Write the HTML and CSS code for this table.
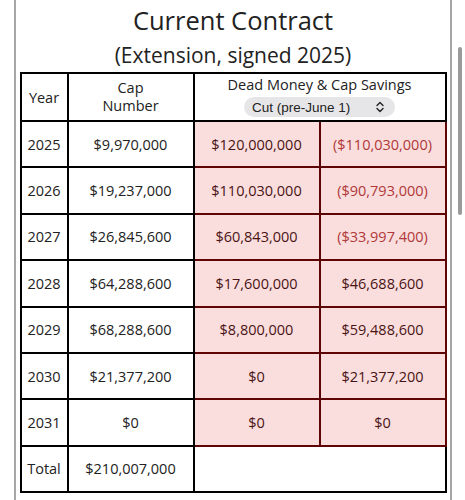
FILE: index.html
```html
<!DOCTYPE html>
<html lang="en">
<head>
    <meta charset="UTF-8">
    <meta name="viewport" content="width=device-width, initial-scale=1.0">
    <title>Current Contract</title>
    <link rel="stylesheet" href="styles.css">
</head>
<body>

    <!-- Contract card -->
    <div class="frame">
        <h2 class="title">Current Contract</h2>
        <div class="subtitle">(Extension, signed 2025)</div>

        <table class="contract-table">
            <colgroup>
                <col class="col-year">
                <col class="col-cap">
                <col class="col-dead">
                <col class="col-dead">
            </colgroup>
            <thead>
                <tr>
                    <th>Year</th>
                    <th class="cap-head">Cap<br>Number</th>
                    <th colspan="2" class="dead-head">
                        <div>Dead Money &amp; Cap Savings</div>
                        <div class="select-pill">
                            <span>Cut (pre-June 1)</span>
                            <svg width="10" height="12" viewBox="0 0 10 12">
                                <path d="M2 4.5 L5 1.5 L8 4.5 M2 7.5 L5 10.5 L8 7.5" fill="none" stroke="#222" stroke-width="1.4" stroke-linecap="round" stroke-linejoin="round"/>
                            </svg>
                        </div>
                    </th>
                </tr>
            </thead>
            <tbody>
                <tr>
                    <td>2025</td>
                    <td>$9,970,000</td>
                    <td class="dead">$120,000,000</td>
                    <td class="dead neg">($110,030,000)</td>
                </tr>
                <tr>
                    <td>2026</td>
                    <td>$19,237,000</td>
                    <td class="dead">$110,030,000</td>
                    <td class="dead neg">($90,793,000)</td>
                </tr>
                <tr>
                    <td>2027</td>
                    <td>$26,845,600</td>
                    <td class="dead">$60,843,000</td>
                    <td class="dead neg">($33,997,400)</td>
                </tr>
                <tr>
                    <td>2028</td>
                    <td>$64,288,600</td>
                    <td class="dead">$17,600,000</td>
                    <td class="dead">$46,688,600</td>
                </tr>
                <tr>
                    <td>2029</td>
                    <td>$68,288,600</td>
                    <td class="dead">$8,800,000</td>
                    <td class="dead">$59,488,600</td>
                </tr>
                <tr>
                    <td>2030</td>
                    <td>$21,377,200</td>
                    <td class="dead">$0</td>
                    <td class="dead">$21,377,200</td>
                </tr>
                <tr>
                    <td>2031</td>
                    <td>$0</td>
                    <td class="dead">$0</td>
                    <td class="dead">$0</td>
                </tr>
                <tr>
                    <td>Total</td>
                    <td>$210,007,000</td>
                    <td colspan="2"></td>
                </tr>
            </tbody>
        </table>
    </div>

    <div class="scrollbar"></div>

</body>
</html>
```

FILE: styles.css
```css
body {
    font-family: "Open Sans", "Noto Sans", sans-serif;
    color: #222;
    background-color: #fff;
    margin: 0;
}
.frame {
    margin: 0 13px 0 14px;
    min-height: 100vh;
    border-left: 2px solid #a6a6a6;
    border-right: 2px solid #a6a6a6;
}
.title {
    margin: 0;
    padding-top: 3px;
    font-size: 25.5px;
    font-weight: normal;
    line-height: 34px;
    text-align: center;
}
.subtitle {
    margin-top: 3px;
    font-size: 21px;
    line-height: 30px;
    text-align: center;
}
.contract-table {
    width: 425px;
    margin: 2px auto 0;
    border-collapse: collapse;
    table-layout: fixed;
    font-size: 14.5px;
}
.col-year {
    width: 47px;
}
.col-cap, .col-dead {
    width: 126px;
}
th, td {
    border: 2px solid #000;
    text-align: center;
    padding: 0;
}
th {
    font-weight: normal;
    height: 44px;
    line-height: 17px;
}
.cap-head {
    line-height: 18px;
}
td {
    height: 44.4px;
}
.dead-head {
    vertical-align: top;
    padding-top: 2px;
}
.select-pill {
    display: flex;
    align-items: center;
    justify-content: space-between;
    width: 151px;
    height: 20px;
    margin: 4px auto 0;
    padding: 0 10px 0 8px;
    box-sizing: border-box;
    border-radius: 10px;
    background-color: #e6e6e8;
    font-family: "Liberation Sans", Arial, sans-serif;
    font-size: 13.5px;
}
.dead {
    background-color: #fadede;
    border-color: #5e0606;
    color: #4a1414;
}
.neg {
    color: #b03838;
}
.scrollbar {
    position: absolute;
    left: 458px;
    top: 47px;
    width: 4px;
    height: 168px;
    border-radius: 2px;
    background-color: #9a9a9a;
}
```
